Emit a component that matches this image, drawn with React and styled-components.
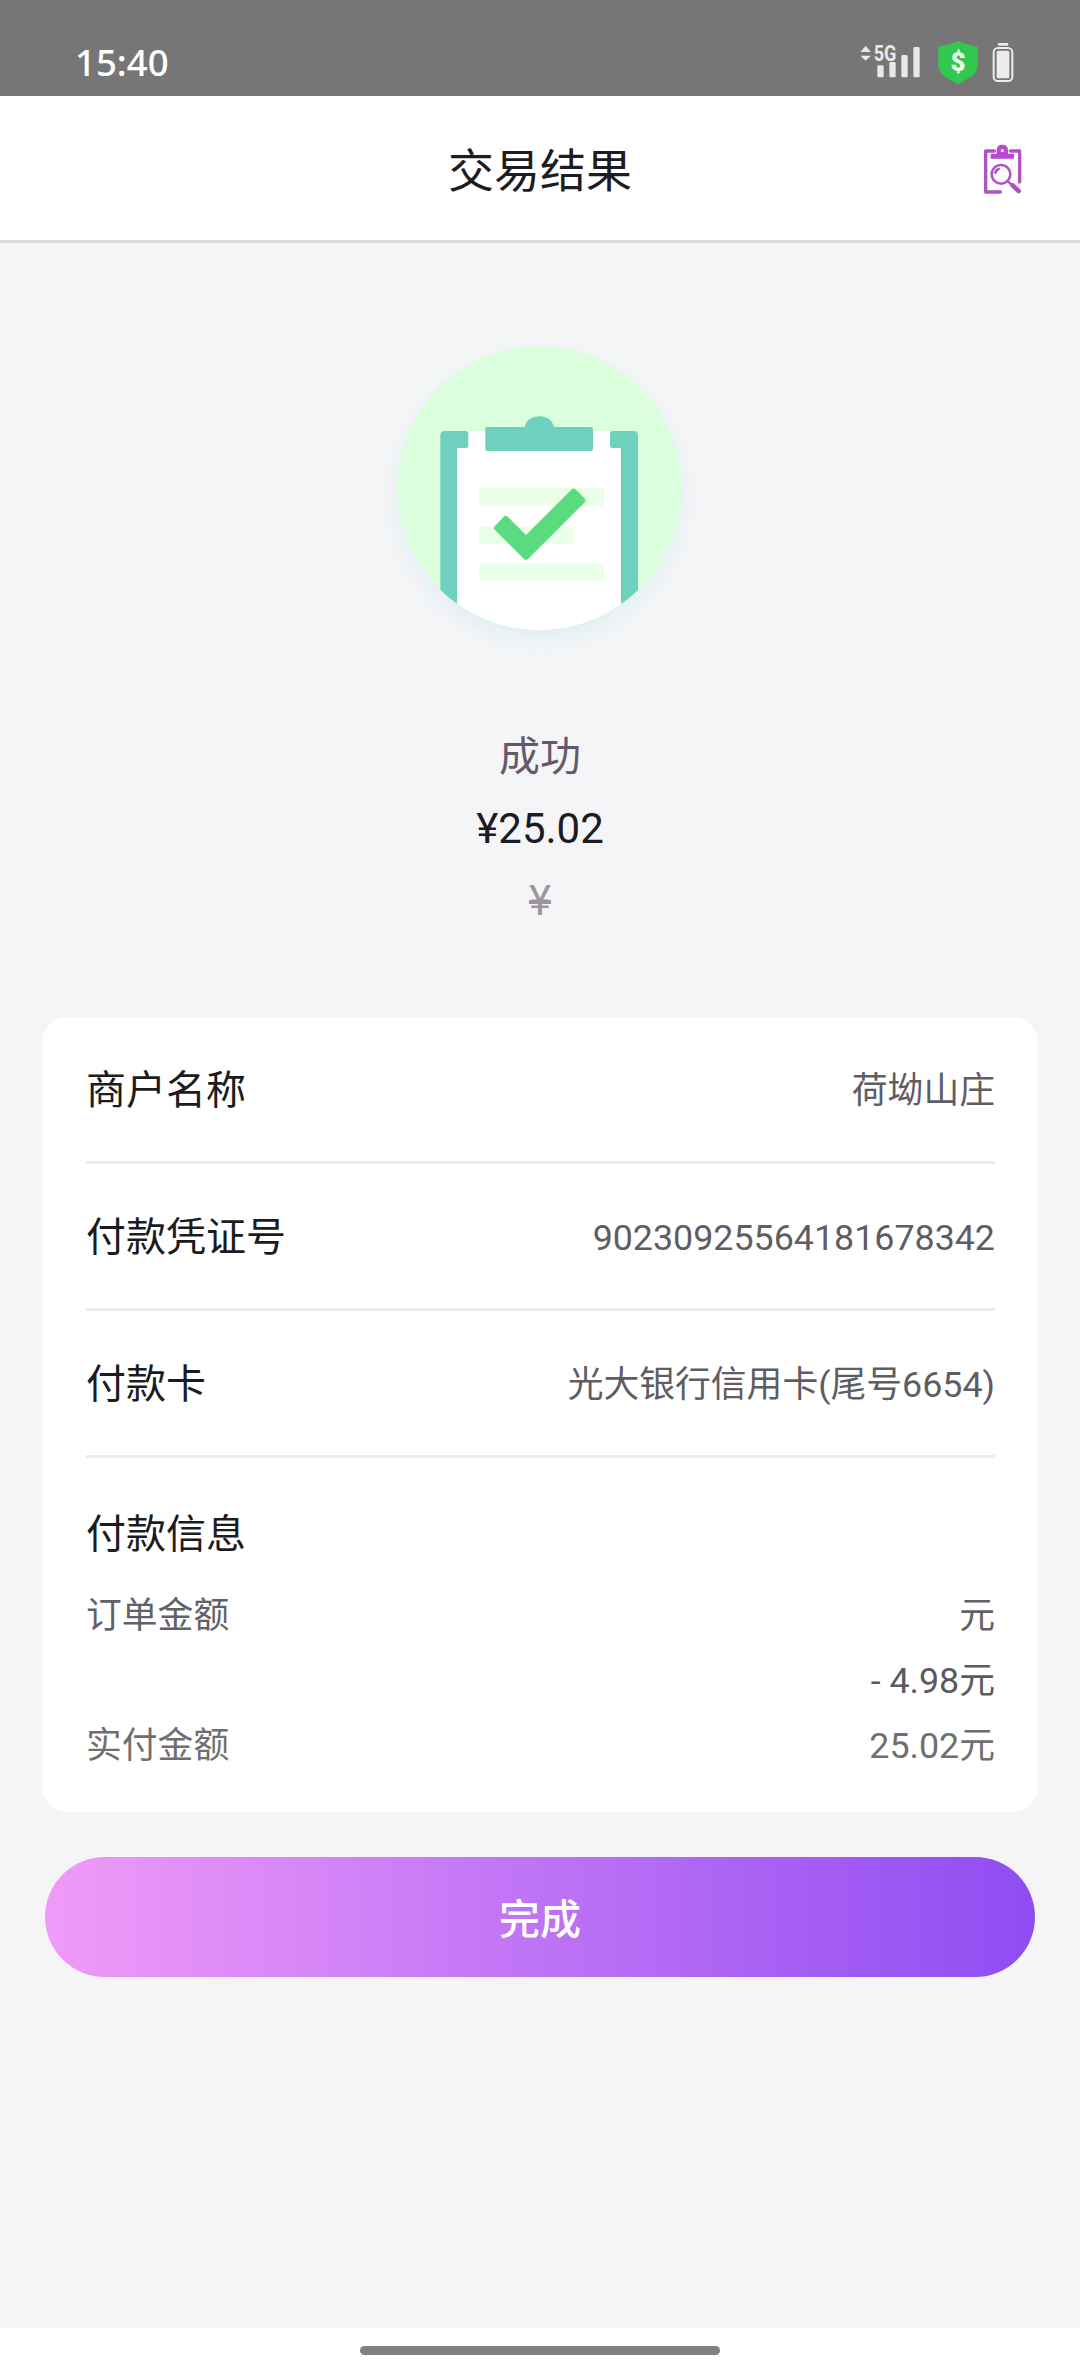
import React from 'react'
import styled, { createGlobalStyle } from 'styled-components'

const GlobalStyle = createGlobalStyle`
  * {
    box-sizing: border-box;
  }

  body {
    margin: 0;
    background: #f5f5f7;
    font-family: Roboto, 'Noto Sans CJK SC', sans-serif;
  }
`

const StyledPage = styled.div`
  display: flex;
  flex-direction: column;
  height: 2376px;
  width: 1080px;
  background: #f5f5f7;
`

const StyledStatusBar = styled.div`
  display: flex;
  align-items: center;
  height: 96px;
  padding: 28px 66px 0 75px;
  background: #767676;
  color: #fff;

  svg {
    display: block;
  }
`

const StyledClock = styled.span`
  flex: 1;
  font-family: 'Noto Sans', sans-serif;
  font-size: 36.6px;
  font-weight: 500;
  line-height: 68px;
`

const StyledStatusIcons = styled.div`
  display: flex;
  align-items: center;
  gap: 13px;
`

const StyledHeader = styled.header`
  display: grid;
  grid-template-columns: 1fr auto 1fr;
  align-items: center;
  height: 147px;
  padding: 0 55px;
  background: #fff;
  border-bottom: 3px solid #d9d9da;
`

const StyledTitle = styled.h1`
  grid-column: 2;
  margin: 0;
  padding-top: 6px;
  color: #1c1c22;
  font-size: 46px;
  font-weight: 400;
  line-height: 60px;
`

const StyledHeaderButton = styled.button`
  justify-self: end;
  padding: 0;
  border: none;
  background: none;

  svg {
    display: block;
  }
`

const StyledResult = styled.section`
  display: flex;
  flex-direction: column;
  align-items: center;
  padding-top: 77px;

  svg {
    display: block;
    margin-bottom: 61px;
  }
`

const StyledResultLine = styled.div`
  height: 72px;
  line-height: 72px;
  font-size: ${({ $size }) => $size || 42}px;
  color: ${({ $color }) => $color};
  text-decoration: ${({ $struck }) => ($struck ? 'line-through' : 'none')};
`

const StyledCard = styled.section`
  margin: 80px 42px 0;
  padding: 0 43px 34px 44px;
  border-radius: 26px;
  background: #fff;
`

const StyledRow = styled.div`
  display: flex;
  align-items: center;
  justify-content: space-between;
  height: 147px;
  padding-top: 4px;
  border-bottom: 3px solid #ebebec;
`

const StyledLabel = styled.span`
  color: #1b1b20;
  font-size: 40px;
  line-height: 60px;
`

const StyledValue = styled.span`
  color: ${({ $color }) => $color || '#5e5d63'};
  font-size: 35.8px;
  line-height: 60px;
`

const StyledInfoTitle = styled.div`
  padding: 47px 0 18px;
  color: #1b1b20;
  font-size: 40px;
  line-height: 60px;
`

const StyledAmountRow = styled.div`
  display: flex;
  align-items: center;
  justify-content: space-between;
  height: 65px;
`

const StyledDoneButton = styled.button`
  height: 120px;
  margin: 45px 45px 0;
  padding: 0 0 3px;
  border: none;
  border-radius: 60px;
  background: linear-gradient(90deg, #f09bf8 0%, #c377f6 45%, #8f4cf2 100%);
  color: #fff;
  font-family: inherit;
  font-size: 41px;
  font-weight: 500;
`

const StyledNavBar = styled.div`
  display: flex;
  justify-content: center;
  height: 48px;
  margin-top: auto;
  padding-top: 18px;
  background: #fff;

  &::before {
    content: '';
    width: 360px;
    height: 9px;
    border-radius: 5px;
    background: #808080;
  }
`

const SignalIcon = () => (
  <svg width="64" height="44" viewBox="0 0 192 132" fill="#e9e9e9">
    <path d="M1 36 L17 18 L33 36 Z M1 47 H33 L17 62 Z" />
    <text
      x="41"
      y="62"
      fontSize="64"
      fontWeight="700"
      fontFamily="Roboto, sans-serif"
      textLength="68"
      lengthAdjust="spacingAndGlyphs"
    >
      5G
    </text>
    <rect x="52" y="76" width="19" height="36" rx="4" />
    <rect x="88" y="66" width="19" height="46" rx="4" />
    <rect x="124" y="45" width="19" height="67" rx="4" />
    <rect x="160" y="21" width="19" height="91" rx="4" />
  </svg>
)

const ShieldIcon = () => (
  <svg width="42" height="44" viewBox="0 0 126 132">
    <path
      d="M63 2 Q88 15 118 19 Q122 20 122 25 V72 Q122 96 102 111 Q84 120 63 133 Q42 120 24 111 Q4 96 4 72 V25 Q4 20 8 19 Q38 15 63 2 Z"
      fill="#32c850"
    />
    <text
      x="63"
      y="92"
      fontSize="78"
      fontWeight="900"
      fontFamily="Roboto, sans-serif"
      textAnchor="middle"
      fill="#effff0"
    >
      $
    </text>
  </svg>
)

const BatteryIcon = () => (
  <svg width="22" height="44" viewBox="0 0 66 132" fill="#ececec">
    <rect x="17" y="9" width="32" height="8" rx="3" />
    <rect x="5" y="24" width="56" height="99" rx="13" fill="none" stroke="#ececec" strokeWidth="6" />
    <rect x="14" y="32" width="38" height="83" rx="5" />
  </svg>
)

const OrderSearchIcon = () => (
  <svg width="45" height="55" viewBox="120 60 135 165" fill="none" stroke="#b052c4" strokeLinecap="round">
    <path d="M163 90 H137 V213 H181" strokeWidth="10" strokeLinejoin="round" />
    <path d="M211 90 H239 V183" strokeWidth="10" strokeLinejoin="round" />
    <path
      d="M152 98 H170 V88 Q170 71 187 71 Q204 71 204 88 V98 H222 V113 H152 Z"
      fill="#b848cd"
      stroke="none"
    />
    <circle cx="187" cy="89" r="5" fill="#f3dcf7" stroke="none" />
    <circle cx="183" cy="160" r="28" strokeWidth="7.5" />
    <path d="M166 155 Q168 147 176 144" strokeWidth="8" />
    <path d="M204 181 L214 191" strokeWidth="7" />
    <path d="M218 193 L236 210" strokeWidth="14" />
  </svg>
)

const SuccessIllustration = () => (
  <svg width="360" height="340" viewBox="0 0 1080 1020">
    <defs>
      <clipPath id="disc">
        <circle cx="538" cy="504" r="426" />
      </clipPath>
      <filter id="glow" x="-30%" y="-30%" width="160%" height="160%">
        <feGaussianBlur stdDeviation="36" />
      </filter>
    </defs>
    <circle cx="538" cy="532" r="420" fill="#c8e8ea" opacity="0.55" filter="url(#glow)" />
    <circle cx="538" cy="504" r="426" fill="#dbffdd" />
    <g clipPath="url(#disc)">
      <rect x="285" y="333" width="505" height="640" fill="#fff" />
      <path
        d="M241 960 V347 Q241 333 255 333 H318 Q325 333 325 340 V377 Q325 384 318 384 H291 V960 Z"
        fill="#6ed1be"
      />
      <path
        d="M834 960 V347 Q834 333 820 333 H757 Q750 333 750 340 V377 Q750 384 757 384 H783 V960 Z"
        fill="#6ed1be"
      />
      <path d="M358 504 H732 V557 H358 Z M358 621 H639 V672 H358 Z M358 730 H732 V783 H358 Z" fill="#e9ffe8" />
    </g>
    <path
      d="M382 321 H493 Q503 289 538 289 Q573 289 583 321 H693 Q699 321 699 327 V387 Q699 393 693 393 H382 Q376 393 376 387 V327 Q376 321 382 321 Z"
      fill="#6ed1be"
    />
    <path
      d="M431 590 Q437 584 443 590 L498 645 L634 509 Q641 502 648 509 L673 534 Q680 541 673 548 L504 717 Q498 723 492 717 L405 630 Q399 624 405 618 Z"
      fill="#5bdb7f"
    />
  </svg>
)

const details = [
  { label: '商户名称', value: '荷坳山庄' },
  { label: '付款凭证号', value: '90230925564181678342' },
  { label: '付款卡', value: '光大银行信用卡(尾号6654)' },
]

const amounts = [
  { label: '订单金额', value: '元', color: '#626167' },
  { label: '', value: '- 4.98元', color: '#5b5a60' },
  { label: '实付金额', value: '25.02元', color: '#6f6f70' },
]

const App = () => (
  <>
    <GlobalStyle />
    <StyledPage>
      <StyledStatusBar>
        <StyledClock>15:40</StyledClock>
        <StyledStatusIcons>
          <SignalIcon />
          <ShieldIcon />
          <BatteryIcon />
        </StyledStatusIcons>
      </StyledStatusBar>
      <StyledHeader>
        <StyledTitle>交易结果</StyledTitle>
        <StyledHeaderButton>
          <OrderSearchIcon />
        </StyledHeaderButton>
      </StyledHeader>
      <StyledResult>
        <SuccessIllustration />
        <StyledResultLine $color="#66586b" $size={41}>
          成功
        </StyledResultLine>
        <StyledResultLine $color="#1b1b22">¥25.02</StyledResultLine>
        <StyledResultLine $color="#9c959f" $struck>
          ¥
        </StyledResultLine>
      </StyledResult>
      <StyledCard>
        {details.map(({ label, value }) => (
          <StyledRow key={label}>
            <StyledLabel>{label}</StyledLabel>
            <StyledValue>{value}</StyledValue>
          </StyledRow>
        ))}
        <StyledInfoTitle>付款信息</StyledInfoTitle>
        {amounts.map(({ label, value, color }) => (
          <StyledAmountRow key={value}>
            <StyledValue $color={color}>{label}</StyledValue>
            <StyledValue $color={color}>{value}</StyledValue>
          </StyledAmountRow>
        ))}
      </StyledCard>
      <StyledDoneButton>完成</StyledDoneButton>
      <StyledNavBar />
    </StyledPage>
  </>
)

export default App
